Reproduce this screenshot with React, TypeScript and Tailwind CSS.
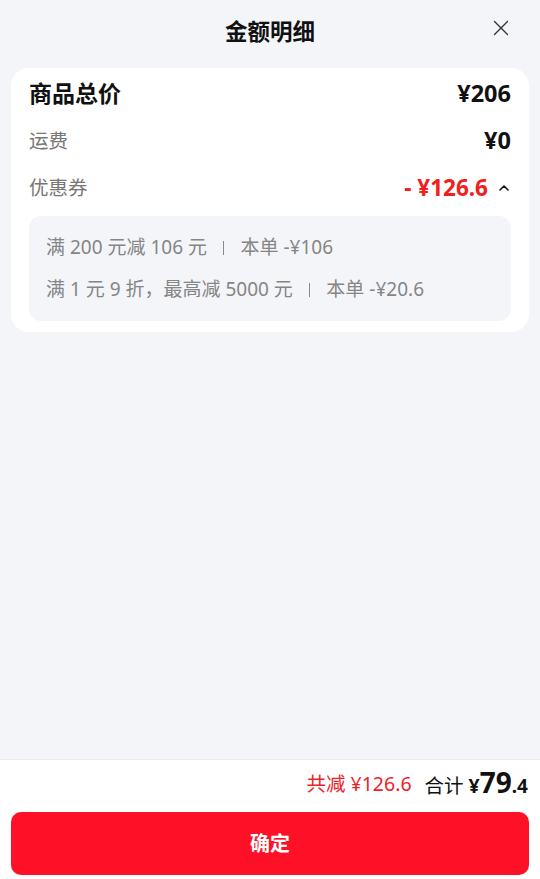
import React from "react";

const font = { fontFamily: '"Noto Sans", "Noto Sans CJK SC", sans-serif' };

const coupons = [
  { rule: "满 200 元减 106 元", save: "-¥106" },
  { rule: "满 1 元 9 折，最高减 5000 元", save: "-¥20.6" },
];

export default function App() {
  return (
    <div
      className="h-[879px] w-[540px] flex flex-col bg-[#f4f5f9] overflow-hidden"
      style={font}
    >
      {/* Header */}
      <div className="relative h-[66px] flex items-center justify-center">
        <h1 className="text-[22.5px] font-bold text-[#111] -mt-[3px]">金额明细</h1>
        <button className="absolute right-[31px] top-[20px] text-[#333]">
          <svg width="16" height="16" viewBox="0 0 16 16" fill="none">
            <path d="M1.5 1.5L14.5 14.5M14.5 1.5L1.5 14.5" stroke="currentColor" strokeWidth="1.4" strokeLinecap="round" />
          </svg>
        </button>
      </div>

      {/* Card */}
      <div className="mx-[11px] mt-[2px] bg-white rounded-[18px] px-[18px] pt-[9px] pb-[11px]">
        <div className="flex items-center justify-between h-[33px]">
          <span className="text-[23px] font-bold text-[#111]">商品总价</span>
          <span className="text-[23.5px] font-bold text-[#111]">¥206</span>
        </div>
        <div className="flex items-center justify-between h-[33px] mt-[14px]">
          <span className="text-[19.5px] text-[#777]">运费</span>
          <span className="text-[23.5px] font-bold text-[#111]">¥0</span>
        </div>
        <div className="flex items-center justify-between h-[33px] mt-[14px]">
          <span className="text-[19.5px] text-[#777]">优惠券</span>
          <span className="flex items-center gap-[9px]">
            <span className="text-[22.5px] font-bold text-[#f0201c]">- ¥126.6</span>
            <svg width="14" height="14" viewBox="0 0 14 14" fill="none">
              <path d="M3 9L7 5L11 9" stroke="#111" strokeWidth="1.6" strokeLinecap="round" strokeLinejoin="round" />
            </svg>
          </span>
        </div>
        <div className="mt-[12px] bg-[#f4f5f9] rounded-[12px] px-[17px] pt-[16px] pb-[16px] flex flex-col gap-[11px]">
          {coupons.map((c) => (
            <div key={c.rule} className="flex items-center text-[19px] text-[#858585] h-[31px]">
              <span>{c.rule}</span>
              <span className="mx-[16px] w-[1.5px] h-[14px] bg-[#8a8a8a]" />
              <span>本单 {c.save}</span>
            </div>
          ))}
        </div>
      </div>

      <div className="flex-1" />

      {/* Bottom bar */}
      <div className="bg-white border-t border-[#ececec] px-[11px] pt-[8px] pb-[4px]">
        <div className="flex items-center justify-end gap-[13px] pr-[1px] h-[32px]">
          <span className="text-[19.5px] text-[#ee1d2a]">共减 ¥126.6</span>
          <span className="flex items-baseline text-[19.5px] text-[#111]">
            <span>合计</span>
            <span className="font-bold ml-[5px]">¥</span>
            <span className="text-[28px] font-bold leading-none">79</span>
            <span className="text-[19px] font-bold">.4</span>
          </span>
        </div>
        <button className="mt-[12px] w-full h-[63px] rounded-[10px] bg-[#fe1126] text-white text-[20px] font-bold">
          确定
        </button>
      </div>
    </div>
  );
}
